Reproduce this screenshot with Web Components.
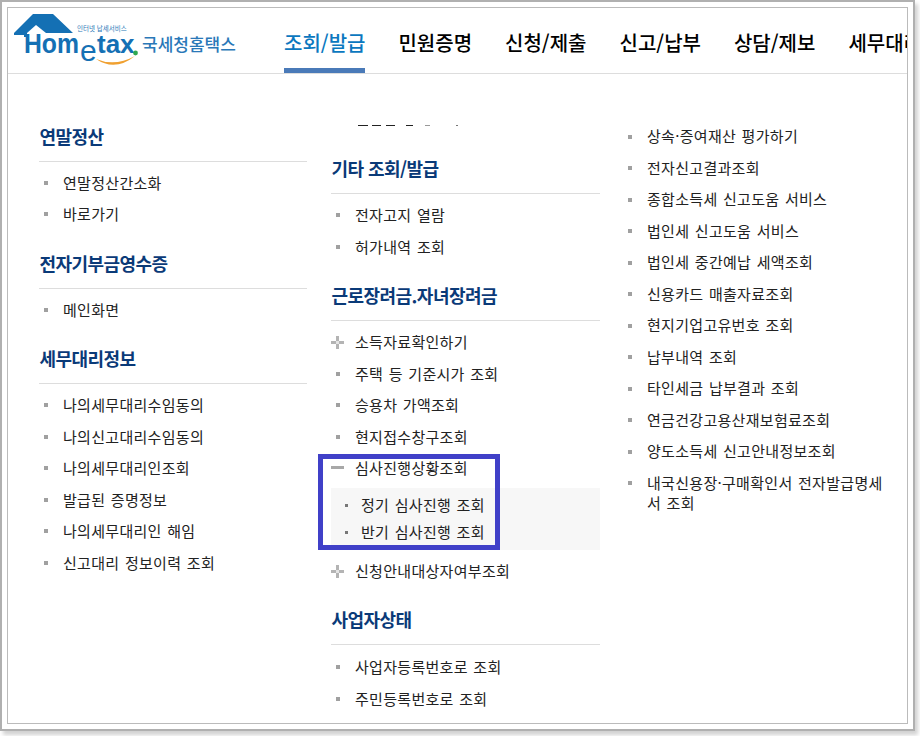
<!DOCTYPE html>
<html lang="ko">
<head>
<meta charset="utf-8">
<style>
  html, body { margin: 0; padding: 0; background: #fff; }
  body { width: 920px; height: 736px; overflow: hidden; font-family: "Noto Sans CJK KR", "Liberation Sans", sans-serif; }
</style>
</head>
<body>
<template id="tpl-logo">
  <style>
    :host { display: block; width: 240px; height: 65px; flex: none; }
    svg { display: block; }
    text { font-family: "Liberation Sans", "Noto Sans CJK KR", sans-serif; }
    .ko { font-family: "Noto Sans CJK KR", sans-serif; }
  </style>
  <svg width="240" height="65" viewBox="8 8 240 65">
    <path d="M14 33 L33 14 H53 L73 33 H46 L36 25 L27 33 V37 H24 V35 H14 Z" fill="#1470b4"/>
    <text class="ko" x="77" y="31" font-size="6.5" fill="#2a78b8">인터넷 납세서비스</text>
    <text x="24" y="53" font-size="28" font-weight="700" fill="#1470b4" textLength="55" lengthAdjust="spacingAndGlyphs">Hom</text>
    <text x="80" y="61" font-size="30" fill="#1470b4">e</text>
    <text x="97" y="53" font-size="26" font-weight="700" fill="#1470b4">tax</text>
    <circle cx="135.5" cy="53" r="2.4" fill="#2fa84f"/>
    <path d="M96 59 Q115 72 135 56 Q115 67 96 59 Z" fill="#f0a030"/>
    <text class="ko" x="142" y="51" font-size="17" font-weight="500" fill="#2a78b8">국세청홈택스</text>
  </svg>
</template>

<template id="tpl-nav">
  <style>
    :host { display: block; height: 65px; border-bottom: 1px solid #ddd; overflow: hidden; }
    .bar { display: flex; align-items: stretch; height: 65px; }
    .items { display: flex; gap: 33px; margin-left: 36px; white-space: nowrap; }
    a { display: block; height: 60px; line-height: 70px; font-size: 20px; font-weight: 500; color: #000; }
    a.on { color: #0b78bf; border-bottom: 5px solid #4a7ab8; }
  </style>
  <div class="bar">
    <home-logo></home-logo>
    <div class="items">
      <a class="on">조회/발급</a><a>민원증명</a><a>신청/제출</a><a>신고/납부</a><a>상담/제보</a><a>세무대리인</a>
    </div>
  </div>
</template>

<template id="tpl-group">
  <style>
    :host { display: block; margin-bottom: 13.75px; }
    h3 { margin: 0; padding-left: .5px; height: 44px; line-height: 38px; font-size: 18px; font-weight: 700; color: #0a3a78; border-bottom: 1px solid #ddd; letter-spacing: -.55px; }
    .list { padding-top: 5.25px; }
  </style>
  <h3><slot name="title"></slot></h3>
  <div class="list"><slot></slot></div>
</template>

<template id="tpl-item">
  <style>
    :host { display: block; position: relative; padding: 5.75px 0 5.75px 24px; font-size: 15px; line-height: 20px; letter-spacing: .3px; word-spacing: 1px; color: #222; word-break: break-all; }
    .ico { position: absolute; left: 5px; top: 14px; width: 4px; height: 4px; background: #a0a0a0; }
    :host([kind="plus"]) .ico { left: 0; top: 10px; width: 13px; height: 13px; background:
      linear-gradient(#e4e4e4, #e4e4e4) center / 3px 3px no-repeat,
      linear-gradient(#b4b4b4, #b4b4b4) center / 13px 3px no-repeat,
      linear-gradient(#b4b4b4, #b4b4b4) center / 3px 13px no-repeat; }
    :host([kind="minus"]) .ico { left: 0; top: 14px; width: 13px; height: 3px; background: #a8a8a8; }
  </style>
  <span class="ico"></span><slot></slot>
</template>

<template id="tpl-sub">
  <style>
    :host { display: block; background: #f7f7f7; padding: 3px 0 5.5px; margin: 3.75px 0 4.75px; }
  </style>
  <slot></slot>
</template>

<template id="tpl-subitem">
  <style>
    :host { display: block; position: relative; padding-left: 30px; font-size: 15px; line-height: 27px; letter-spacing: .3px; word-spacing: 1px; color: #222; }
    .ico { position: absolute; left: 14px; top: 13px; width: 3px; height: 3px; background: #777; }
  </style>
  <span class="ico"></span><slot></slot>
</template>

<template id="tpl-panel">
  <style>
    :host { display: block; position: relative; width: 899px; height: 715px; border: 1px solid #bbb; background: #fff; overflow: hidden; }
    .cols { display: grid; grid-template-columns: 268px 269px 262px; column-gap: 24px; padding-left: 31px; }
    .cols > div:last-child { margin-left: -1px; }
    .col1 { padding-top: 42.5px; }
    .col2 { margin-top: 50px; height: 590px; overflow: hidden; }
    .col2 svg { display: block; margin-bottom: 23px; }
    .col3 { padding-top: 46.5px; }
    .mark { position: absolute; left: 310px; top: 446px; width: 172px; height: 86px; border: 5px solid #4040c8; }
  </style>
  <top-nav></top-nav>
  <div class="cols">
    <div class="col1"><slot name="c1"></slot></div>
    <div class="col2">
      <svg width="140" height="2" viewBox="0 0 140 2">
        <g fill="#222">
          <rect x="27" y="1" width="10" height="1"/><rect x="41" y="1" width="9" height="1"/><rect x="55" y="1" width="9" height="1"/>
          <rect x="75" y="1" width="7" height="1"/>
        </g>
        <rect x="94" y="1" width="5" height="1" fill="#999"/><rect x="125" y="1" width="2" height="1" fill="#777"/>
      </svg>
      <slot name="c2"></slot>
    </div>
    <div class="col3"><slot name="c3"></slot></div>
  </div>
  <div class="mark"></div>
</template>

<template id="tpl-frame">
  <style>
    :host { display: block; width: 915px; height: 731px; box-sizing: border-box; border: 2px solid #b0b0b0; padding: 5px; box-shadow: 3px 4px 4px rgba(0,0,0,.18); background: #fff; }
  </style>
  <slot></slot>
</template>

<shot-frame>
  <menu-panel>
    <div slot="c1">
      <menu-group><span slot="title">연말정산</span>
        <menu-item>연말정산간소화</menu-item>
        <menu-item>바로가기</menu-item>
      </menu-group>
      <menu-group><span slot="title">전자기부금영수증</span>
        <menu-item>메인화면</menu-item>
      </menu-group>
      <menu-group><span slot="title">세무대리정보</span>
        <menu-item>나의세무대리수임동의</menu-item>
        <menu-item>나의신고대리수임동의</menu-item>
        <menu-item>나의세무대리인조회</menu-item>
        <menu-item>발급된 증명정보</menu-item>
        <menu-item>나의세무대리인 해임</menu-item>
        <menu-item>신고대리 정보이력 조회</menu-item>
      </menu-group>
    </div>
    <div slot="c2">
      <menu-group><span slot="title">기타 조회/발급</span>
        <menu-item>전자고지 열람</menu-item>
        <menu-item>허가내역 조회</menu-item>
      </menu-group>
      <menu-group><span slot="title">근로장려금.자녀장려금</span>
        <menu-item kind="plus">소득자료확인하기</menu-item>
        <menu-item>주택 등 기준시가 조회</menu-item>
        <menu-item>승용차 가액조회</menu-item>
        <menu-item>현지접수창구조회</menu-item>
        <menu-item kind="minus">심사진행상황조회</menu-item>
        <menu-sub>
          <menu-subitem>정기 심사진행 조회</menu-subitem>
          <menu-subitem>반기 심사진행 조회</menu-subitem>
        </menu-sub>
        <menu-item kind="plus">신청안내대상자여부조회</menu-item>
      </menu-group>
      <menu-group><span slot="title">사업자상태</span>
        <menu-item style="margin-top:1px">사업자등록번호로 조회</menu-item>
        <menu-item>주민등록번호로 조회</menu-item>
      </menu-group>
    </div>
    <div slot="c3">
      <menu-item>상속·증여재산 평가하기</menu-item>
      <menu-item>전자신고결과조회</menu-item>
      <menu-item>종합소득세 신고도움 서비스</menu-item>
      <menu-item>법인세 신고도움 서비스</menu-item>
      <menu-item>법인세 중간예납 세액조회</menu-item>
      <menu-item>신용카드 매출자료조회</menu-item>
      <menu-item>현지기업고유번호 조회</menu-item>
      <menu-item>납부내역 조회</menu-item>
      <menu-item>타인세금 납부결과 조회</menu-item>
      <menu-item>연금건강고용산재보험료조회</menu-item>
      <menu-item>양도소득세 신고안내정보조회</menu-item>
      <menu-item>내국신용장·구매확인서 전자발급명세서 조회</menu-item>
    </div>
  </menu-panel>
</shot-frame>

<script>
  // Cada elemento clona su template en un shadow root abierto
  function define(tag, tplId) {
    customElements.define(tag, class extends HTMLElement {
      constructor() {
        super();
        this.attachShadow({ mode: 'open' });
        this.shadowRoot.appendChild(document.getElementById(tplId).content.cloneNode(true));
      }
    });
  }
  define('home-logo', 'tpl-logo');
  define('top-nav', 'tpl-nav');
  define('menu-group', 'tpl-group');
  define('menu-item', 'tpl-item');
  define('menu-sub', 'tpl-sub');
  define('menu-subitem', 'tpl-subitem');
  define('menu-panel', 'tpl-panel');
  define('shot-frame', 'tpl-frame');
</script>
</body>
</html>
